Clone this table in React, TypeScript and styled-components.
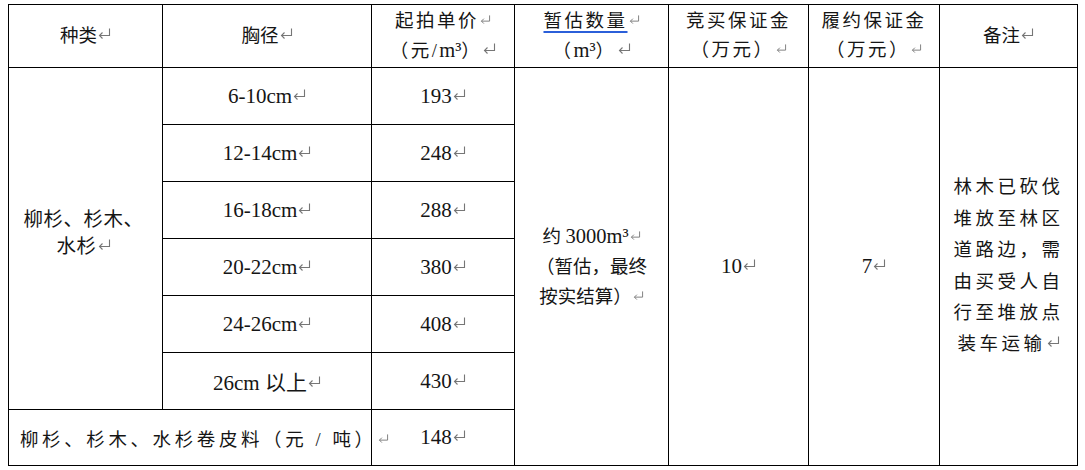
import React from 'react';
import styled, { createGlobalStyle } from 'styled-components';

const sizes = ['6-10cm', '12-14cm', '16-18cm', '20-22cm', '24-26cm', '26cm 以上'];
const prices = ['193', '248', '288', '380', '408', '430'];
const widths = [154, 209, 143, 154, 140, 131, 138];
const noteLines = ['林木已砍伐', '堆放至林区', '道路边，需', '由买受人自', '行至堆放点'];

export default function App() {
  return (
    <>
      <GlobalStyle />
      <Sheet>
        <colgroup>
          {widths.map((w, i) => (
            <Col key={i} $w={w} />
          ))}
        </colgroup>
        <tbody>
          <Row $h={63}>
            <Head>
              种类<Mark />
            </Head>
            <Head>
              胸径<Mark />
            </Head>
            <Head $spaced>
              <Line>
                起拍单价<Mark $small />
              </Line>
              <Line>
                （元/<Num>m³</Num>）<Mark />
              </Line>
            </Head>
            <Head $spaced>
              <Line>
                <Checked>暂估数量</Checked>
                <Mark $small />
              </Line>
              <Line>
                （<Num>m³</Num>）<Mark />
              </Line>
            </Head>
            <Head $spaced>
              <Line>竞买保证金</Line>
              <Line>
                （万元）<Mark $small />
              </Line>
            </Head>
            <Head $spaced>
              <Line>履约保证金</Line>
              <Line>
                （万元）<Mark $small />
              </Line>
            </Head>
            <Head>
              备注<Mark />
            </Head>
          </Row>

          {sizes.map((s, i) => (
            <Row key={s} $h={57}>
              {i === 0 && (
                <Species rowSpan={6}>
                  <Line>柳杉、杉木、</Line>
                  <Line>
                    水杉<Mark />
                  </Line>
                </Species>
              )}
              <Cell>
                {s}
                <Mark />
              </Cell>
              <Cell>
                {prices[i]}
                <Mark />
              </Cell>
              {i === 0 && (
                <>
                  <Quantity rowSpan={7}>
                    <Line>
                      约 <Num>3000m³</Num>
                      <Mark $small />
                    </Line>
                    <Line>（暂估，最终</Line>
                    <Line>
                      按实结算）<Mark $small />
                    </Line>
                  </Quantity>
                  <Cell rowSpan={7}>
                    10<Mark />
                  </Cell>
                  <Cell rowSpan={7}>
                    7<Mark />
                  </Cell>
                  <Note rowSpan={7}>
                    {noteLines.map((l) => (
                      <Line key={l}>{l}</Line>
                    ))}
                    <Line>
                      装车运输<Mark />
                    </Line>
                  </Note>
                </>
              )}
            </Row>
          ))}

          <Row $h={56}>
            <Bark colSpan={2}>
              柳杉、杉木、水杉卷皮料（元 / 吨）<Mark $small />
            </Bark>
            <Cell>
              148<Mark />
            </Cell>
          </Row>
        </tbody>
      </Sheet>
    </>
  );
}

function Mark({ $small }: { $small?: boolean }) {
  return (
    <MarkIcon $small={$small} viewBox="0 0 13 11">
      <path d="M11.5 0.5V7.5H1.5" />
      <path d="M4.5 4.5L1.5 7.5L4.5 10.5" />
    </MarkIcon>
  );
}

const GlobalStyle = createGlobalStyle`
  html, body {
    margin: 0;
    background: #fff;
  }
  body {
    padding: 4px 0 0 8px;
    font-family: "Liberation Serif", "Noto Sans CJK SC", serif;
    color: #151515;
  }
`;

const Sheet = styled.table`
  width: 1069px;
  border-collapse: collapse;
  table-layout: fixed;
`;

const Col = styled.col<{ $w: number }>`
  width: ${({ $w }) => $w}px;
`;

const Row = styled.tr<{ $h: number }>`
  height: ${({ $h }) => $h}px;
`;

const Cell = styled.td`
  padding: 0 4px;
  border: 1px solid #000;
  text-align: center;
  vertical-align: middle;
  font-size: 21px;
  white-space: nowrap;
`;

const Head = styled(Cell)<{ $spaced?: boolean }>`
  font-size: 18.5px;
  line-height: 29px;
  letter-spacing: ${({ $spaced }) => ($spaced ? '2.5px' : '0')};
`;

const Species = styled(Cell)`
  padding: 0 4px 12px 0;
  font-size: 19.5px;
  line-height: 27px;
  letter-spacing: 0.5px;
`;

const Quantity = styled(Cell)`
  font-size: 18.5px;
  line-height: 30px;
`;

const Note = styled(Cell)`
  font-size: 18.5px;
  line-height: 31.4px;
  letter-spacing: 3.5px;
`;

const Bark = styled(Cell)`
  padding-left: 11px;
  text-align: left;
  font-size: 18.5px;
  letter-spacing: 3.6px;
`;

const Line = styled.div`
  display: block;
`;

const Num = styled.span`
  font-size: 20.5px;
  letter-spacing: 0;
`;

const Checked = styled.span`
  text-decoration: underline;
  text-decoration-color: #2b5fd9;
  text-decoration-thickness: 2px;
  text-underline-offset: 4px;
`;

const MarkIcon = styled.svg<{ $small?: boolean }>`
  display: inline-block;
  width: ${({ $small }) => ($small ? '11px' : '13px')};
  height: ${({ $small }) => ($small ? '9px' : '11px')};
  margin-left: 1px;
  vertical-align: 3px;
  fill: none;
  stroke: #767676;
  stroke-width: 1.1;
`;
